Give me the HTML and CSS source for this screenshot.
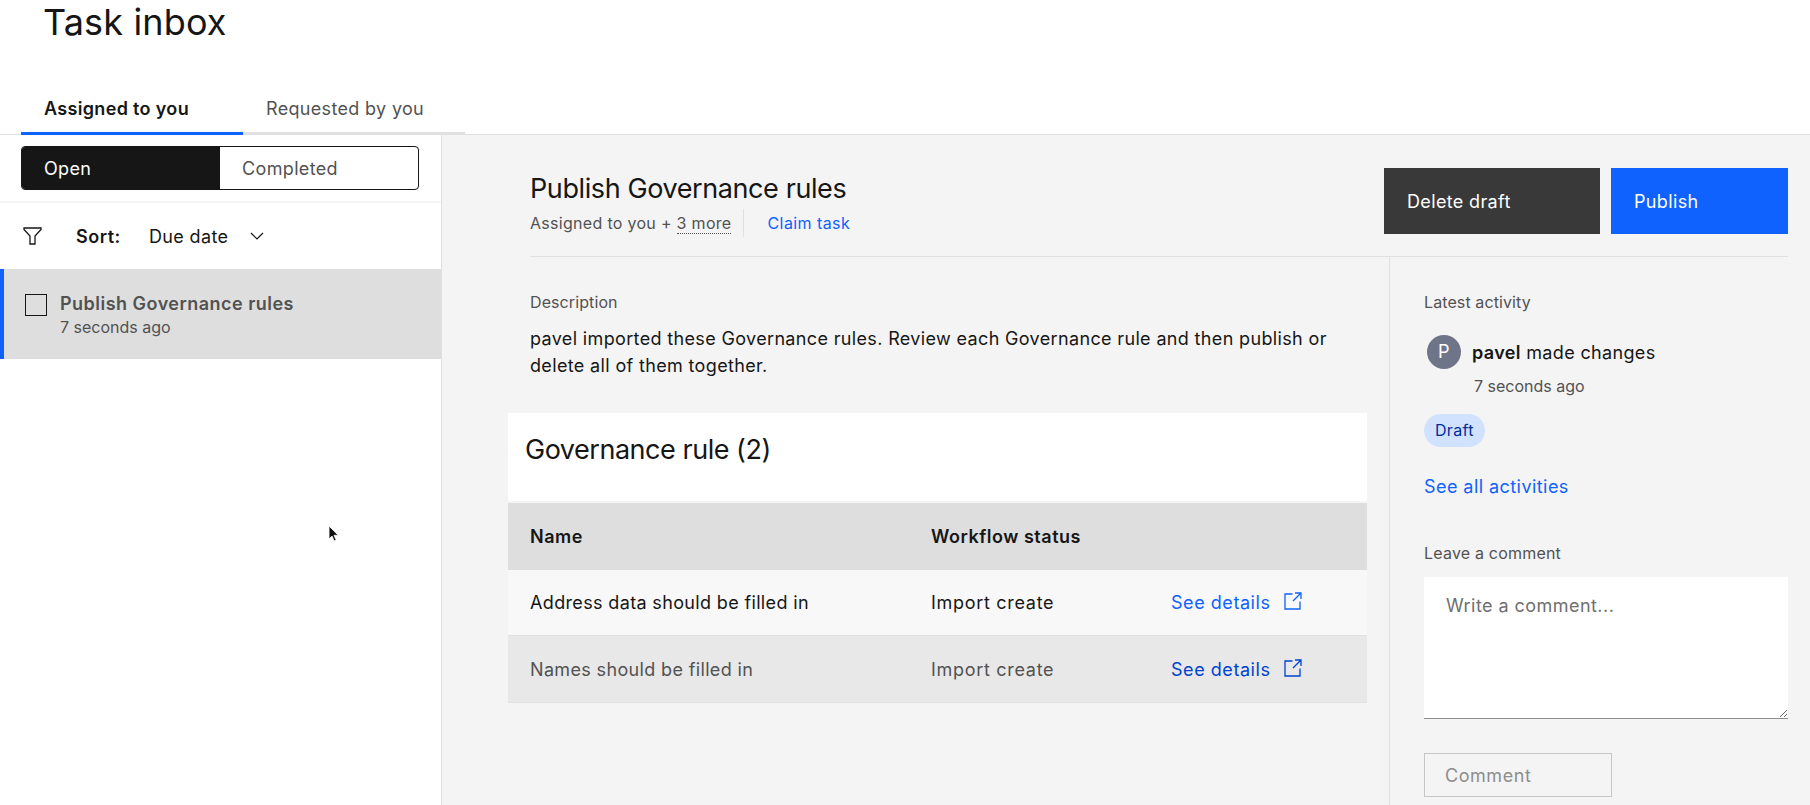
FILE: index.html
```html
<!DOCTYPE html>
<html lang="en">
<head>
<meta charset="utf-8">
<title>Task inbox</title>
<link rel="stylesheet" href="styles.css">
</head>
<body>
<header class="page-header">
  <h1 class="page-title">Task inbox</h1>
  <nav class="tabs">
    <a class="tab tab-active">Assigned to you</a>
    <a class="tab">Requested by you</a>
  </nav>
</header>
<div class="workspace">
  <aside class="sidebar">
    <div class="toggle-wrap">
      <div class="toggle">
        <span class="toggle-item toggle-on">Open</span>
        <span class="toggle-item">Completed</span>
      </div>
    </div>
    <div class="sort-row">
      <svg class="filter-icon" viewBox="0 0 19 18" width="19" height="18" fill="none" stroke="#161616" stroke-width="1.3"><path d="M1 1h17v1.500l-6 6.500v8H7V9L1 2.500z"/></svg>
      <span class="sort-label">Sort:</span>
      <span class="sort-value">Due date</span>
      <svg class="chevron" viewBox="0 0 14 8" width="14" height="8" fill="none" stroke="#161616" stroke-width="1.2"><path d="M1 1l6 6 6-6"/></svg>
    </div>
    <div class="task-item">
      <span class="checkbox"></span>
      <div class="task-text">
        <div class="task-title">Publish Governance rules</div>
        <div class="task-time">7 seconds ago</div>
      </div>
    </div>
  </aside>
  <main class="detail">
    <div class="detail-head">
      <div>
        <h2 class="detail-title">Publish Governance rules</h2>
        <div class="meta">
          <span>Assigned to you + <span class="more">3 more</span></span>
          <a class="link claim">Claim task</a>
        </div>
      </div>
      <div class="actions">
        <button class="btn btn-dark">Delete draft</button>
        <button class="btn btn-primary">Publish</button>
      </div>
    </div>
    <div class="detail-body">
      <section class="content">
        <div class="label">Description</div>
        <p class="desc">pavel imported these Governance rules. Review each Governance rule and then publish or delete all of them together.</p>
        <div class="card">
          <h3 class="card-title">Governance rule (2)</h3>
          <div class="table">
            <div class="row row-head"><span class="c1">Name</span><span class="c2">Workflow status</span><span class="c3"></span></div>
            <div class="row row-a">
              <span class="c1">Address data should be filled in</span><span class="c2">Import create</span>
              <span class="c3"><a class="link">See details</a><svg class="ext" viewBox="0 0 18 18" width="18" height="18" fill="none" stroke="#0f62fe" stroke-width="1.3"><path d="M8.500 2H1v15h15V9.500M11 1h6v6M17 1L9 9"/></svg></span>
            </div>
            <div class="row row-b">
              <span class="c1">Names should be filled in</span><span class="c2">Import create</span>
              <span class="c3"><a class="link link-dark">See details</a><svg class="ext" viewBox="0 0 18 18" width="18" height="18" fill="none" stroke="#0043ce" stroke-width="1.3"><path d="M8.500 2H1v15h15V9.500M11 1h6v6M17 1L9 9"/></svg></span>
            </div>
          </div>
        </div>
      </section>
      <aside class="activity">
        <div class="label">Latest activity</div>
        <div class="who"><span class="avatar">P</span><span class="who-text"><b>pavel</b> made changes</span></div>
        <div class="when">7 seconds ago</div>
        <span class="tag">Draft</span>
        <a class="link all">See all activities</a>
        <label class="label comment-label" for="c">Leave a comment</label>
        <textarea id="c" class="comment" placeholder="Write a comment..."></textarea>
        <button class="btn-comment" disabled>Comment</button>
      </aside>
    </div>
  </main>
</div>
<svg class="cursor" viewBox="0 0 12 18" width="12" height="18"><path d="M1 1v13l3-3 2.200 5 2-.9L6 10.300h4.200z" fill="#111" stroke="#fff" stroke-width=".8"/></svg>
</body>
</html>
```

FILE: styles.css
```css
* { box-sizing: border-box; }
html, body { margin: 0; height: 805px; overflow: hidden; }
body { font-family: Inter, "Noto Sans", Arial, sans-serif; color: #161616; background: #fff; position: relative; font-size: 18px; letter-spacing: 0.35px; }
.page-header { height: 135px; border-bottom: 1px solid #e0e0e0; position: relative; }
.page-title { margin: 0; height: 96px; padding: 0 0 0 43px; font-size: 36px; font-weight: 400; line-height: 44px; letter-spacing: 0.15px; }
.tabs { display: flex; padding-left: 21px; }
.tab { width: 222px; height: 39px; padding: 0 0 0 23px; font-size: 18px; line-height: 26px; letter-spacing: 0.33px; color: #525252; border-bottom: 3px solid #e0e0e0; }
.tab-active { color: #161616; font-weight: 600; border-bottom-color: #0f62fe; }
.workspace { display: flex; height: 670px; }
.sidebar { width: 442px; background: #fff; border-right: 1px solid #e0e0e0; flex: none; }
.toggle-wrap { padding: 11px 22px 12px 21px; border-bottom: 2px solid #f4f4f4; height: 68px; }
.toggle { display: flex; height: 44px; border: 1px solid #161616; border-radius: 4px; overflow: hidden; }
.toggle-item { flex: 1; padding: 0 22px; line-height: 44px; font-size: 18px; color: #525252; }
.toggle-on { background: #161616; color: #fff; }
.sort-row { display: flex; align-items: center; height: 66px; padding-left: 23px; }
.filter-icon { margin-right: 34px; }
.sort-label { font-weight: 600; width: 73px; letter-spacing: 0.5px; }
.sort-value { width: 101px; }
.task-item { display: flex; height: 90px; background: #dedede; border-left: 4px solid #0f62fe; padding-top: 23px; }
.checkbox { width: 22px; height: 22px; border: 1px solid #161616; margin: 2px 13px 0 21px; flex: none; }
.task-title { font-weight: 600; color: #525252; line-height: 24px; letter-spacing: 0.48px; }
.task-time { font-size: 16px; color: #525252; line-height: 22px; letter-spacing: 0; }
.detail { flex: 1; min-width: 0; background: #f4f4f4; padding: 0 22px 0 66px; }
.detail-head { display: flex; justify-content: space-between; height: 122px; border-bottom: 1px solid #e0e0e0; padding-top: 34px; margin-left: 22px; }
.detail-title { margin: 3px 0 0; font-size: 27px; font-weight: 400; line-height: 34px; letter-spacing: -0.4px; }
.meta { display: flex; align-items: center; margin-top: 3px; font-size: 16px; color: #525252; height: 28px; letter-spacing: 0.3px; }
.more { border-bottom: 1px dotted #525252; }
.claim { margin-left: 12px; padding-left: 23px; border-left: 1px solid #e0e0e0; line-height: 28px; letter-spacing: 0.42px; }
.link { color: #0f62fe; }
.link-dark { color: #0043ce; }
.actions { display: flex; gap: 11px; margin-top: -1px; }
.btn { height: 66px; border: 0; text-align: left; padding: 0 23px; font: inherit; letter-spacing: inherit; color: #fff; }
.btn-dark { width: 216px; background: #393939; }
.btn-primary { width: 177px; background: #0f62fe; }
.detail-body { display: flex; height: 548px; }
.content { width: 859px; flex: none; padding-top: 34px; }
.label { display: block; font-size: 16px; color: #525252; line-height: 22px; letter-spacing: 0.1px; }
.content > .label { margin-left: 22px; }
.desc { margin: 12px 0 0 22px; line-height: 27px; width: 806px; }
.card { margin-top: 34px; }
.card-title { margin: 0; background: #fff; height: 88px; padding: 19px 0 0 17px; font-size: 27px; font-weight: 400; line-height: 36px; letter-spacing: -0.47px; }
.table { margin-top: 2px; }
.row { display: flex; align-items: center; height: 66px; border-bottom: 1px solid #e0e0e0; }
.row-head { background: #dedede; font-weight: 600; border: 0; height: 67px; letter-spacing: 0.53px; }
.row-a { background: #f8f8f8; }
.row-b { background: #e8e8e8; color: #525252; height: 67px; }
.c1 { width: 423px; padding-left: 22px; flex: none; }
.c2 { width: 240px; flex: none; }
.row-a .c2, .row-b .c2 { letter-spacing: 0.7px; }
.c3 { display: flex; align-items: center; letter-spacing: 0.55px; }
.ext { margin: -3px 0 0 14px; }
.activity { margin-left: 22px; flex: 1; border-left: 1px solid #e0e0e0; padding: 34px 0 0 34px; display: flex; flex-direction: column; align-items: flex-start; }
.who { display: flex; align-items: center; margin: 22px 0 0 3px; height: 34px; }
.avatar { width: 34px; height: 34px; border-radius: 50%; background: #6f7589; color: #fff; text-align: center; line-height: 34px; font-size: 18px; margin-right: 11px; flex: none; }
.who-text b { font-weight: 600; }
.when { font-size: 16px; color: #525252; margin: 6px 0 0 50px; line-height: 22px; letter-spacing: 0; }
.tag { margin-top: 17px; height: 33px; padding: 0 11px; border-radius: 17px; background: #d0e2ff; color: #002d9c; font-size: 16px; line-height: 33px; letter-spacing: 0.3px; }
.all { margin-top: 27px; line-height: 26px; letter-spacing: 0.44px; }
.comment-label { margin-top: 42px; letter-spacing: 0.2px; }
.comment { display: block; margin-top: 13px; width: 364px; height: 142px; border: 0; border-bottom: 1px solid #8d8d8d; background: #fff; padding: 18px 22px; font: inherit; letter-spacing: 0.45px; outline: 0; }
.comment::placeholder { color: #6f6f6f; opacity: 1; }
.btn-comment { margin-top: 34px; width: 188px; height: 44px; background: #f4f4f4; border: 1px solid #c6c6c6; color: #8d8d8d; font: inherit; letter-spacing: 0.55px; text-align: left; padding: 0 20px; }
.cursor { position: absolute; left: 328px; top: 525px; }
```
